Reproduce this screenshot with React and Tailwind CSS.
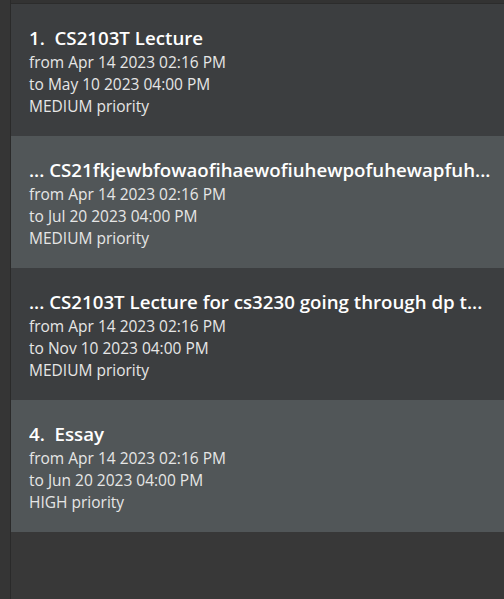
import React from 'react';

const tasks = [
  { title: '1.  CS2103T Lecture', from: 'Apr 14 2023 02:16 PM', to: 'May 10 2023 04:00 PM', priority: 'MEDIUM' },
  { title: '... CS21fkjewbfowaofihaewofiuhewpofuhewapfuh...', from: 'Apr 14 2023 02:16 PM', to: 'Jul 20 2023 04:00 PM', priority: 'MEDIUM' },
  { title: '... CS2103T Lecture for cs3230 going through dp t...', from: 'Apr 14 2023 02:16 PM', to: 'Nov 10 2023 04:00 PM', priority: 'MEDIUM' },
  { title: '4.  Essay', from: 'Apr 14 2023 02:16 PM', to: 'Jun 20 2023 04:00 PM', priority: 'HIGH' },
];

// Karta ait satır - tek ve çift satırlar farklı arka plan
const TaskCard = ({ task, index }) => (
  <div
    className={`h-[132px] pl-[18px] pt-[21px] ${index % 2 === 0 ? 'bg-[#3c3e40]' : 'bg-[#515658]'}`}
  >
    <div className="text-[18.7px] leading-[26px] font-semibold text-white whitespace-pre overflow-hidden">
      {task.title}
    </div>
    <div className="text-[15.5px] leading-[22px] text-[#e6e6e6]">
      <div>from {task.from}</div>
      <div>to {task.to}</div>
      <div>{task.priority} priority</div>
    </div>
  </div>
);

export default function App() {
  return (
    <div
      className="w-[504px] h-[599px] bg-[#383838] flex overflow-hidden"
      style={{ fontFamily: '"Open Sans", "Noto Sans", sans-serif' }}
    >
      <div className="w-[10px] shrink-0 bg-[#353535] border-r border-[#2a2a2a] box-content" />
      <div className="flex-1 flex flex-col">
        <div className="h-[4px] bg-[#333333] border-b border-[#2c2c2c] box-border" />
        {tasks.map((task, index) => (
          <TaskCard key={index} task={task} index={index} />
        ))}
      </div>
    </div>
  );
}
